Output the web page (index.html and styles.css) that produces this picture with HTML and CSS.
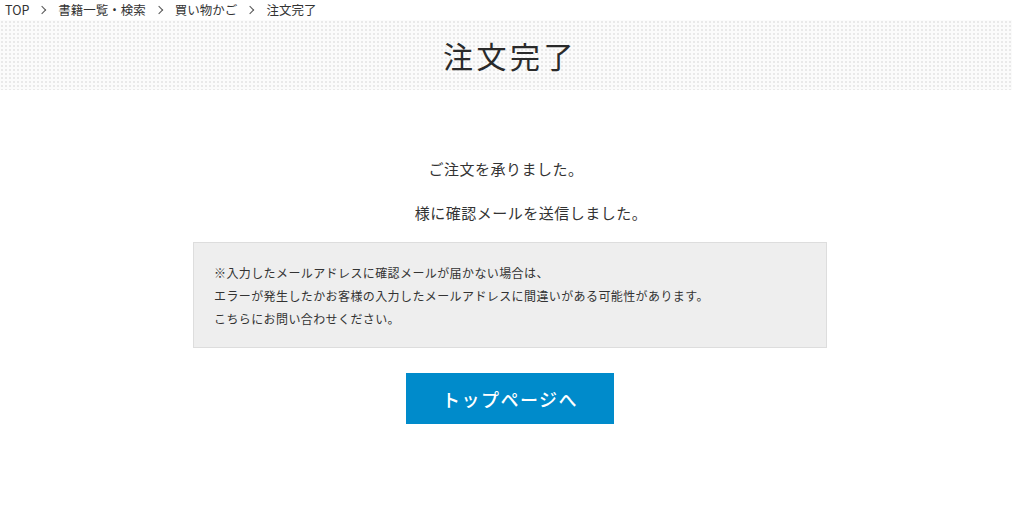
FILE: index.html
```html
<!DOCTYPE html>
<html lang="ja">
<head>
    <meta charset="UTF-8">
    <meta name="viewport" content="width=device-width, initial-scale=1.0">
    <title>注文完了</title>
    <link rel="stylesheet" href="styles.css">
</head>
<body>
    <nav class="breadcrumb">
        <a href="#">TOP</a>
        <span class="sep"></span>
        <a href="#">書籍一覧・検索</a>
        <span class="sep"></span>
        <a href="#">買い物かご</a>
        <span class="sep"></span>
        <span class="current">注文完了</span>
    </nav>

    <header class="page-head">
        <h1>注文完了</h1>
    </header>

    <main class="complete">
        <p class="message">ご注文を承りました。</p>
        <p class="message"><span class="customer-name"></span>様に確認メールを送信しました。</p>

        <div class="notice">
            <p>※入力したメールアドレスに確認メールが届かない場合は、</p>
            <p>エラーが発生したかお客様の入力したメールアドレスに間違いがある可能性があります。</p>
            <p>こちらにお問い合わせください。</p>
        </div>

        <a class="button" href="#">トップページへ</a>
    </main>
</body>
</html>
```

FILE: styles.css
```css
body {
    margin: 0;
    padding: 0;
    font-family: "Noto Sans CJK JP", "Noto Sans", sans-serif;
    color: #333;
    background-color: #fff;
}

a {
    color: inherit;
    text-decoration: none;
}

/* パンくず */
.breadcrumb {
    display: flex;
    align-items: center;
    height: 20px;
    padding-left: 5px;
    font-size: 12.5px;
    line-height: 20px;
    color: #333;
}

.breadcrumb .sep {
    display: inline-block;
    width: 5px;
    height: 5px;
    border-top: 1px solid #555;
    border-right: 1px solid #555;
    transform: rotate(45deg);
    margin: 0 13px 0 10px;
}

/* 見出し */
.page-head {
    height: 70px;
    display: flex;
    justify-content: center;
    align-items: center;
    padding-left: 8px;
    background-color: #fbfbfb;
    background-image: radial-gradient(circle, #e9e9e9 0.9px, transparent 1.1px);
    background-size: 4px 4px;
}

.page-head h1 {
    margin: 0;
    font-size: 30px;
    font-weight: 400;
    letter-spacing: 3.5px;
    color: #2a2a2a;
}

/* 本文 */
.complete {
    display: flex;
    flex-direction: column;
    align-items: center;
    padding-top: 68px;
}

.message {
    margin: 0 0 22px;
    font-size: 15px;
    letter-spacing: 0.5px;
    line-height: 22px;
}

.customer-name {
    display: inline-block;
    width: 50px;
}

.notice {
    box-sizing: border-box;
    width: 634px;
    margin: -4px 0 0 8px;
    padding: 18px 20px 17px;
    background-color: #eee;
    border: 1px solid #ddd;
    font-size: 12px;
    letter-spacing: 0.4px;
    line-height: 23px;
}

.notice p {
    margin: 0;
}

.button {
    display: flex;
    justify-content: center;
    align-items: center;
    width: 208px;
    height: 51px;
    margin: 25px 0 0 8px;
    background-color: #008bcb;
    color: #fff;
    font-size: 18px;
    font-weight: 500;
    letter-spacing: 1.5px;
}
```
